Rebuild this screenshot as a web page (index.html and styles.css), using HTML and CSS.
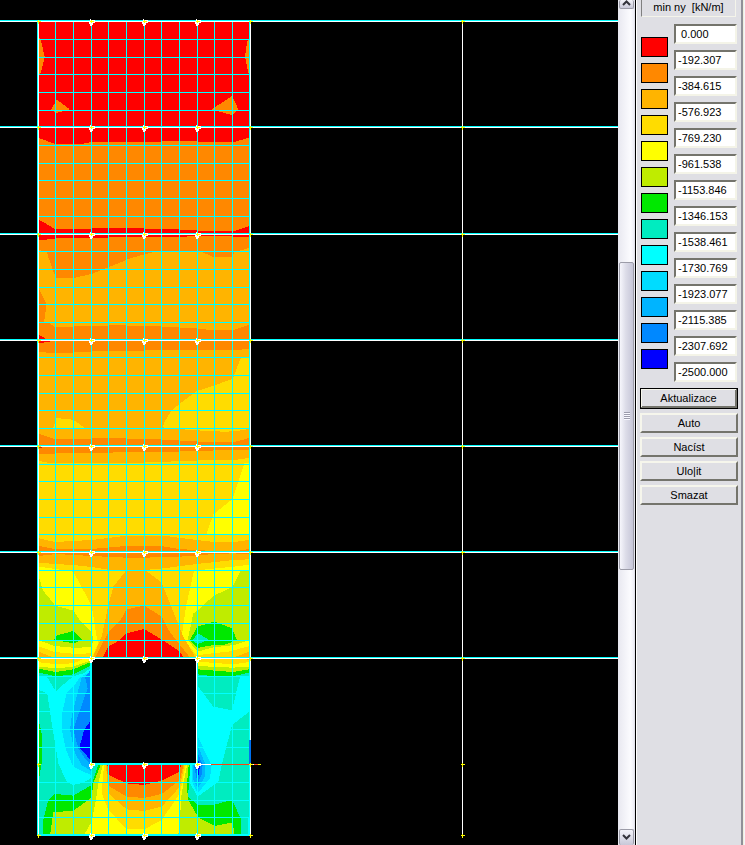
FILE: index.html
```
<!DOCTYPE html>
<html lang="cs">
<head>
<meta charset="utf-8">
<title>min ny [kN/m]</title>
<link rel="stylesheet" href="styles.css">
</head>
<body>
<main class="app">
<section class="view" aria-label="min ny">
<svg class="plot" viewBox="0 0 618 845" shape-rendering="crispEdges">
  <defs>
    <path id="cross" fill="#ff0" d="M-1 0h4v1h-4zM0-1h1v4h-1z"/>
    <g id="node"><path fill="#fff" d="M-1-2h1v1h4v3h-2v2h-1v1h-2v-2h-1v-3h1z"/><path fill="#ff0" d="M-1 0h4v1h-4zM0-1h1v3h-1z"/></g>
    <g id="row"><use href="#cross" x="38"/><use href="#node" x="91"/><use href="#node" x="144"/><use href="#node" x="197"/><use href="#cross" x="250"/></g>
  </defs>
  <svg x="30" y="10" width="230" height="140" viewBox="0 0 690 420">
    <path class="c1" d="M27 33H658V420H27z"/>
    <path class="c2" d="M27 82 33 92 44 141 33 188 27 192zM658 88 652 92 645 141 655 190 658 192zM80 269 120 298 80 309 63 300zM606 258 626 300 604 315 545 298zM27 384 75 402H158L186 397 395 396 398 393H503L506 397H614L658 381V420H27z"/>
  </svg>
  <svg x="30" y="130" width="230" height="140" viewBox="0 0 690 420">
    <path class="c2" d="M27 0H658V420H27z"/>
    <path class="c1" d="M27 0H658V22L614 36H503L500 33H395V36H185L160 41H72L27 24zM27 269 75 297H185L187 294H342L345 297H450V300H503V303H612L658 288V321H608V318H490L450 321H236V324H78L76 327H50V330H27z"/>
    <path class="c3" d="M27 360 51 366 64 420H27zM222 420 290 388 343 373 380 364 515 366 551 381H606L614 366 658 354V420z"/>
  </svg>
  <svg x="30" y="260" width="230" height="140" viewBox="0 0 690 420">
    <path class="c3" d="M27 0H658V420H27z"/>
    <path class="c2" d="M58 0H290L235 22 185 42 135 53H77zM27 88 50 132 42 186 58 190 75 201H130L132 198 236 197 238 195H290V198H395V201H445L450 205H500L505 207 550 210H612L658 194V267H635V270H345L343 273H187L184 276H130L128 279H48L46 276H27z"/>
    <path class="c1" d="M27 225 62 244 27 250z"/>
    <path class="c4" d="M633 292H658V420H458L503 393 608 357z"/>
  </svg>
  <svg x="30" y="390" width="230" height="140" viewBox="0 0 690 420">
    <path class="c3" d="M27 0H658V420H27z"/>
    <path class="c4" d="M505 0H658V117L615 124 580 125 480 120 397 112 406 92 424 62 448 42zM78 84 128 89 145 99 163 114H70zM27 213 60 219H340L345 216 500 213 505 210H612L658 204V420H27z"/>
    <path class="c2" d="M27 132 72 147H185V144H290L292 147H395V150H450V153L550 156H612L658 144V180H550V183H450V186L185 188 184 190H78V192H27z"/>
    <path fill="#d02010" d="M27 170H36V174H27z"/>
    <path class="c5" d="M643 220H658V420H534L551 372 608 327z"/>
  </svg>
  <svg x="30" y="520" width="230" height="150" viewBox="0 0 690 450">
    <path class="c4" d="M27 0H658V413H27z"/>
    <path class="c5" d="M543 0H658V44L530 42zM27 140 130 155 185 257 200 350 205 370 185 413H27zM492 152 610 140 658 134V413H505L455 350 468 260z"/>
    <path class="c3" d="M27 55 75 66 185 60 290 47H400L500 60 555 66H612L658 60V118L612 120 500 132 400 145 345 150 395 188 420 250 440 300 460 350 497 413H188L215 350 235 257 250 200 290 150H240L185 141 130 135 76 132 27 128z"/>
    <path class="c2" d="M27 78 75 87H185L238 82 290 78H395L445 87 550 93 608 95 658 87V103L610 100 555 102 450 110 345 113H290L185 108 78 102 27 108zM343 257 395 290 415 330 480 413H195L235 337 275 295 290 268z"/>
    <path class="c1" d="M343 327 400 362 450 395 460 413H218L235 380 270 360 290 340z"/>
    <path class="c6" d="M27 170 38 210 76 257 130 272 155 308 185 335 190 362 184 382 128 383 75 378 27 362zM27 290 33 325 27 355zM633 150H658V360L612 375 550 382 503 395 473 360 490 280 505 270 550 228 608 200z"/>
    <path class="c4" d="M27 380 75 396 150 403 185 398V413H27zM658 378 600 394 505 405V413H658z"/>
    <path class="c3" d="M27 395 70 413H27zM658 395 610 413H658z"/>
    <path class="c7" d="M130 333 157 360 130 370 72 360 78 347zM553 305 606 325 621 360 585 374 550 375 503 384 480 360 502 320z"/>
    <path class="c8" d="M503 340 535 358 503 373 488 362z"/>
  </svg>
  <svg x="30" y="657" width="240" height="188" viewBox="0 21 720 564">
    <path class="c8" d="M27 21H658V555H27z"/>
    <path class="c7" d="M27 21H185V45L130 73 78 79 27 68zM503 21H658V68L608 79H553L503 73zM27 215 35 250V340L27 385zM40 555V510L55 450 75 432 130 437 185 405 205 345H481L474 440 503 465H550L606 449 632 505V555z"/>
    <path class="c6" d="M27 21H185V35L130 58 78 66 27 56zM503 21H658V58L608 66 503 58zM60 555 70 487 130 482 185 443 190 400 212 345H476L470 410 475 450 505 503 555 528 608 517 614 555z"/>
    <path class="c5" d="M27 21H185V30L130 50 80 55 27 50zM503 21H658V50L608 53 503 48zM162 555 185 515 198 450 205 400 218 345H471L455 430 450 500 445 555z"/>
    <path class="c4" d="M27 21H175L130 40 75 42 27 37zM515 21H658V36L608 43 503 35zM222 345H467L450 430 395 510 345 537H290L235 480 215 430z"/>
    <path class="c3" d="M27 21H70L27 27zM610 21H658V30zM228 345H463L450 410 395 470 343 483 290 478 235 430z"/>
    <path class="c2" d="M230 345H460L450 390 395 432 343 444 290 440 236 408z"/>
    <path class="c1" d="M232 345H453L448 365 395 392 343 405 290 400 236 375z"/>
    <path class="c9" d="M27 79H50L78 125 95 108 130 79 160 70 182 55V385L160 398 130 405 110 395 85 340 65 220 52 130 27 120zM503 108 550 170 606 181 630 80 658 79V185L606 225 575 345 565 395 503 440 480 400V345H503z"/>
    <path class="c10" d="M182 65 150 82 130 110 110 130 96 190V240L108 300 130 350 182 375zM503 260 545 345 540 385 503 430 485 395V345H503z"/>
    <path class="c11" d="M182 70 155 82 145 120 125 200 120 240 135 310 155 345 182 362zM503 285 525 340V380L503 415 490 390V345H503z"/>
    <path class="c12" d="M182 60 165 80 173 115 150 180 130 240 145 295 165 325 182 345zM503 308 518 345 515 375 503 400 493 350z"/>
    <path class="c13" d="M177 80H182V88zM182 213 163 237 148 293 182 330zM503 325 510 345 507 370 503 380 497 345z"/>
  </svg>
  <path class="mesh" d="M55.5 21V835M73.5 21V835M91.5 21V835M108.500 21V835M126.500 21V835M144.500 21V835M161.500 21V835M179.500 21V835M197.500 21V835M214.500 21V835M232.500 21V835M38 39.500H250M38 57.500H250M38 74.500H250M38 92.500H250M38 110.500H250M38 145.500H250M38 163.500H250M38 180.500H250M38 198.500H250M38 216.500H250M38 251.500H250M38 269.500H250M38 287.500H250M38 304.500H250M38 322.500H250M38 357.500H250M38 375.500H250M38 393.500H250M38 410.500H250M38 428.500H250M38 464.500H250M38 481.500H250M38 499.500H250M38 517.500H250M38 534.500H250M38 570.500H250M38 587.500H250M38 605.500H250M38 623.500H250M38 640.500H250M38 676.500H250M38 693.500H250M38 711.500H250M38 729.500H250M38 747.500H250M38 782.500H250M38 800.500H250M38 817.500H250"/>
  <path d="M92 659H196V764H92z"/>
  <path class="mesh" d="M0 20.500H618M0 126.500H618M0 233.500H618M0 339.500H618M0 445.500H618M0 551.500H618M0 657.500H618M37.500 20V836M249.500 20V836"/>
  <path class="edge" d="M0 21.500H618M0 127.500H618M0 234.500H618M0 340.500H618M0 446.500H618M0 552.500H618M0 658.500H618M38.500 21V835M250.500 21V835M462.500 21V835M196.500 659V764M198 764.500H211M250 764.500H254"/>
  <path fill="#0ff" d="M90 659H92V764H90zM38 834H250V836H38zM90 763H198V765H90zM248 817H249V834H248z"/>
  <path fill="#ff4010" d="M211 764H249V765H211zM254 764H258V765H254z"/>
  <path fill="#ff0" d="M258 764H261V765H258z"/>
  <path fill="#0070f0" d="M249 740H251V764H249z"/>
  <use href="#row" y="21"/><use href="#row" y="127"/><use href="#row" y="234"/><use href="#row" y="340"/><use href="#row" y="446"/><use href="#row" y="552"/><use href="#row" y="658"/><use href="#row" y="764"/><use href="#row" y="835"/>
  <g><use href="#cross" x="462" y="21"/><use href="#cross" x="462" y="127"/><use href="#cross" x="462" y="234"/><use href="#cross" x="462" y="340"/><use href="#cross" x="462" y="446"/><use href="#cross" x="462" y="552"/><use href="#cross" x="462" y="658"/><use href="#cross" x="462" y="764"/><use href="#cross" x="462" y="835"/></g>
</svg>
</section>
<div class="scrollbar">
  <button class="arrow arrow-up" type="button" aria-label="Nahoru"><svg width="9" height="6" viewBox="0 0 9 6"><path d="M1 5 4.500 1.500 8 5"/></svg></button>
  <div class="space-above"></div>
  <div class="thumb"><span class="grip"></span></div>
  <div class="space-below"></div>
  <button class="arrow arrow-down" type="button" aria-label="Dolů"><svg width="9" height="6" viewBox="0 0 9 6"><path d="M1 1 4.500 4.500 8 1"/></svg></button>
</div>
<aside class="panel">
  <h1 class="title">min ny&nbsp; [kN/m]</h1>
  <div class="legend">
    <div class="swatches">
      <i class="swatch s1"></i><i class="swatch s2"></i><i class="swatch s3"></i><i class="swatch s4"></i><i class="swatch s5"></i><i class="swatch s6"></i><i class="swatch s7"></i><i class="swatch s8"></i><i class="swatch s9"></i><i class="swatch s10"></i><i class="swatch s11"></i><i class="swatch s12"></i><i class="swatch s13"></i>
    </div>
    <div class="values">
      <input class="value" aria-label="Mez 1" value=" 0.000">
      <input class="value" aria-label="Mez 2" value="-192.307">
      <input class="value" aria-label="Mez 3" value="-384.615">
      <input class="value" aria-label="Mez 4" value="-576.923">
      <input class="value" aria-label="Mez 5" value="-769.230">
      <input class="value" aria-label="Mez 6" value="-961.538">
      <input class="value" aria-label="Mez 7" value="-1153.846">
      <input class="value" aria-label="Mez 8" value="-1346.153">
      <input class="value" aria-label="Mez 9" value="-1538.461">
      <input class="value" aria-label="Mez 10" value="-1730.769">
      <input class="value" aria-label="Mez 11" value="-1923.077">
      <input class="value" aria-label="Mez 12" value="-2115.385">
      <input class="value" aria-label="Mez 13" value="-2307.692">
      <input class="value" aria-label="Mez 14" value="-2500.000">
    </div>
  </div>
  <div class="actions">
    <button class="action default" type="button">Aktualizace</button>
    <button class="action" type="button">Auto</button>
    <button class="action" type="button">Nacíst</button>
    <button class="action" type="button">Ulo|it</button>
    <button class="action" type="button">Smazat</button>
  </div>
</aside>
</main>
</body>
</html>
```
FILE: styles.css
```
* { box-sizing: border-box; }
body { margin: 0; background: #000; font: 11px/14px "Liberation Sans", Arial, sans-serif; color: #000; }
button, input { font: inherit; color: inherit; margin: 0; border-radius: 0; }
.app { display: grid; grid-template-columns: 1fr 17px 110px; min-height: 100vh; }
.view { background: #000; min-width: 0; }
.plot { display: block; width: 100%; height: auto; }
.mesh { fill: none; stroke: #00ffff; }
.edge { fill: none; stroke: #fff; }
.c1 { fill: #ff0000; }
.c2 { fill: #ff8800; }
.c3 { fill: #ffb400; }
.c4 { fill: #ffdc00; }
.c5 { fill: #ffff00; }
.c6 { fill: #bfec00; }
.c7 { fill: #00e800; }
.c8 { fill: #00ecc0; }
.c9 { fill: #00ffff; }
.c10 { fill: #00dcff; }
.c11 { fill: #00b4ff; }
.c12 { fill: #0088ff; }
.c13 { fill: #0000ff; }

.scrollbar { display: flex; flex-direction: column; padding-left: 1px; background: linear-gradient(90deg, #e8e8f0, #fcfcff 80%, #eeeef6); border-right: 1px solid #e4e4ec; }
.arrow { display: flex; justify-content: center; padding: 0; background: linear-gradient(#f4f4fa, #c8c8d8); border: 1px solid #9c9ca8; border-radius: 2px; overflow: hidden; }
.arrow path { fill: none; stroke: #33333b; stroke-width: 2; }
.arrow-up { height: 9px; align-items: flex-start; border-top: 0; }
.arrow-down { height: 16px; align-items: center; border-bottom: 0; }
.space-above { flex: 254; }
.thumb { flex: 306; display: flex; align-items: center; justify-content: center; background: linear-gradient(90deg, #f6f6fc, #dcdce8 45%, #c6c6d8); border: 1px solid #9c9ca8; border-radius: 2px; }
.grip { width: 6px; height: 8px; background: repeating-linear-gradient(#9c9cac 0 1px, #f8f8ff 1px 2px); }
.space-below { flex: 260; }

.panel { background: #dfdfe4; border-left: 1px solid #000; box-shadow: inset 1px 0 #fff, inset -1px 0 #f4f4f8, inset -2px 0 #efefdf, inset -4px 0 #909098; padding: 0 7px 0 4px; }
.title { margin: 0 2px 7px 1px; height: 17px; font-size: 11px; font-weight: 400; line-height: 15px; text-align: center; border: 1px solid #808080; border-top: 0; border-right-color: #f4f4ea; border-bottom-color: #f4f4ea; }
.legend { display: grid; grid-template-columns: 27px 1fr; gap: 6px; padding: 0 1px; }
.swatches, .values { display: grid; gap: 6px; align-content: start; }
.swatches { padding-top: 13px; }
.swatch { height: 20px; border: 1px solid #000; }
.value { width: 100%; height: 20px; padding: 0 1px 1px 2px; background: #fff; border: 2px solid; border-color: #74746c #f4f4e8 #f4f4e8 #74746c; outline: 0; }
.s1 { background: #ff0000; }
.s2 { background: #ff8800; }
.s3 { background: #ffb400; }
.s4 { background: #ffdc00; }
.s5 { background: #ffff00; }
.s6 { background: #bfec00; }
.s7 { background: #00e800; }
.s8 { background: #00ecc0; }
.s9 { background: #00ffff; }
.s10 { background: #00dcff; }
.s11 { background: #00b4ff; }
.s12 { background: #0088ff; }
.s13 { background: #0000ff; }
.actions { display: grid; gap: 4px; margin-top: 6px; }
.action { height: 20px; padding: 0; background: #dfdfe4; border: 2px solid; border-color: #f6f6ec #74746c #74746c #f6f6ec; line-height: 14px; }
.default { height: 21px; border-width: 1px 2px 2px 1px; outline: 1px solid #000; outline-offset: -1px; box-shadow: inset 1px 1px #f6f6ec, inset -1px -1px #74746c; }
```
